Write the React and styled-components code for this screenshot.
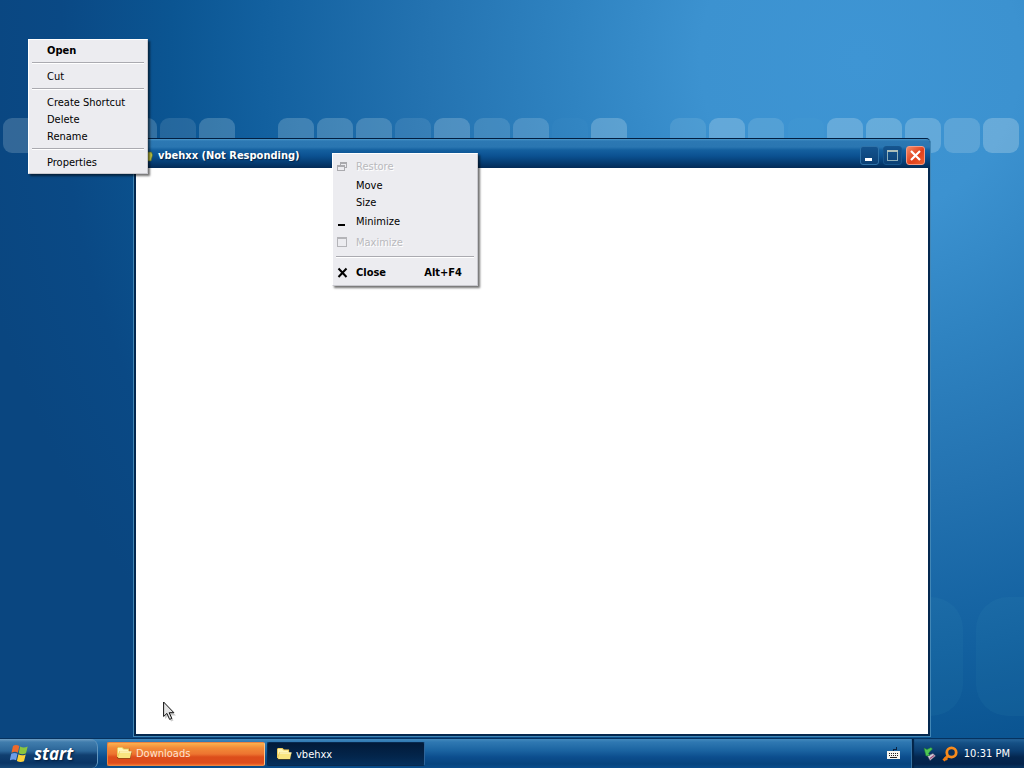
import React from "react";
import styled, { createGlobalStyle } from "styled-components";

const GlobalStyle = createGlobalStyle`
  * { box-sizing: border-box; }
  body {
    margin: 0;
    font: 11px/17px "DejaVu Sans Condensed", "DejaVu Sans", sans-serif;
    color: #000;
  }
  button { font: inherit; color: inherit; padding: 0; border: 0; background: none; }
  svg { display: block; flex: none; }
`;

const Screen = styled.div`
  min-height: 100vh;
  display: flex;
  flex-direction: column;
`;

const Desktop = styled.main`
  flex: 1;
  position: relative;
  overflow: hidden;
  background: radial-gradient(
    circle at 84% 8%,
    #3e95d4 0,
    #3c92d0 160px,
    #2f83c1 290px,
    #2473b1 430px,
    #12609f 600px,
    #0b5592 690px,
    #0a4985 800px,
    #0a4680 900px
  );
`;

const Wallpaper = styled.svg`
  position: absolute;
  top: 0;
  right: 0;
`;

const Window = styled.section`
  position: absolute;
  inset: 138px 93px 1px 133px;
  display: flex;
  flex-direction: column;
  border: 1px solid #4186b5;
  border-top-color: #021e40;
  border-radius: 3px 5px 0 0;
  background: #04284f;
  padding: 0 2px 2px;
`;

const TitleBar = styled.header`
  height: 29px;
  display: flex;
  align-items: center;
  gap: 5px;
  padding: 3px 5px 0 4px;
  margin: 0 -2px;
  border-radius: 2px 4px 0 0;
  background: linear-gradient(#4b96c8 0, #2c78b3 2px, #2a76b1 8px, #14609f 11px, #0b5191 17px, #053b70 24px, #032b57 29px);
  color: #fff;
`;

const Title = styled.h1`
  flex: 1;
  margin: 0;
  font-size: 11px;
  font-weight: bold;
  text-shadow: 1px 1px 1px #02244a;
`;

const WindowButtons = styled.div`
  display: flex;
  gap: 4px;
`;

const WindowButton = styled.button`
  width: 19px;
  height: 19px;
  display: grid;
  place-items: center;
  border: 1px solid ${(p) => (p.$close ? "#f49b86" : p.$dim ? "#17568d" : "#2f72a8")};
  border-radius: 3px;
  background: ${(p) =>
    p.$close
      ? "linear-gradient(135deg, #f58a66, #e0401c 55%, #f0602e)"
      : "linear-gradient(#14548f, #0b4075)"};
`;

const Client = styled.div`
  flex: 1;
  background: #fff;
`;

const Menu = styled.div`
  position: absolute;
  left: ${(p) => p.$x}px;
  top: ${(p) => p.$y}px;
  width: ${(p) => p.$width}px;
  display: flex;
  flex-direction: column;
  padding: 2px;
  border: 1px solid #fff;
  border-right-color: #c9c9cf;
  border-bottom-color: #c9c9cf;
  background: #ececf0;
  box-shadow: 2px 2px 2px rgba(0, 0, 0, 0.55);
`;

const MenuRow = styled.button`
  height: ${(p) => (p.$tall ? 21 : 17)}px;
  display: grid;
  grid-template-columns: 16px 1fr auto;
  align-items: center;
  padding-right: 13px;
  text-align: left;
  font-weight: ${(p) => (p.$bold ? "bold" : "normal")};
  &:disabled {
    color: #b9b9bd;
    text-shadow: 1px 1px 0 #fff;
  }
  svg { margin-left: ${(p) => (p.$tall ? 2 : 0)}px; }
`;

const WideMenu = styled(Menu)`
  ${MenuRow} { grid-template-columns: 21px 1fr auto; }
`;

const Separator = styled.hr`
  width: auto;
  height: 9px;
  margin: 0 1px;
  border: 0;
  background: linear-gradient(transparent 3px, #aaaab0 3px 4px, #fff 4px 5px, transparent 5px);
`;

const Pointer = styled.svg`
  position: absolute;
  left: 163px;
  bottom: 16px;
`;

const Taskbar = styled.footer`
  height: 30px;
  display: flex;
  align-items: stretch;
  border-top: 1px solid #06325f;
  background: linear-gradient(#4389bc 0, #2f78b2 3px, #1c65a2 11px, #0c4e8e 18px, #07447e 25px, #0a5090 30px);
`;

const StartButton = styled.button`
  width: 98px;
  display: flex;
  align-items: center;
  gap: 4px;
  padding-left: 10px;
  border-right: 1px solid #6296be;
  border-radius: 0 8px 6px 0;
  background: linear-gradient(#6e9ec4 0, #417dad 3px, #2a6598 12px, #103f70 16px, #0a3565 24px, #174979 29px);
  color: #fff;
  font: italic bold 17px/20px "Open Sans", sans-serif;
  text-shadow: 1px 1px 2px #021c3b;
`;

const Tasks = styled.nav`
  flex: 1;
  display: flex;
  gap: 2px;
  padding: 3px 0 2px 9px;
`;

const Task = styled.button`
  width: 158px;
  display: flex;
  align-items: center;
  gap: 3px;
  padding-left: 8px;
  padding-bottom: ${(p) => (p.$alert ? 2 : 0)}px;
  border: 1px solid ${(p) => (p.$alert ? "#e9833f" : "#082a50")};
  border-right-color: ${(p) => (p.$alert ? "#ffc188" : "#2e659a")};
  border-radius: 2px;
  background: ${(p) =>
    p.$alert
      ? "linear-gradient(#fbb14f 0, #f18a38 5px, #ed7430 11px, #dc4d1b 14px, #dd4c1b 20px, #f36c2d)"
      : "linear-gradient(#021a39, #03254b 60%, #062f5b)"};
  color: ${(p) => (p.$alert ? "#ffe3d1" : "#fff")};
`;

const InputIndicator = styled.button`
  width: 39px;
  display: grid;
  place-items: center;
  padding: 0 0 0 4px;
`;

const Tray = styled.div`
  display: flex;
  align-items: center;
  gap: 6px;
  padding: 0 14px 0 11px;
  border-left: 1px solid #3774a5;
  box-shadow: inset 2px 0 1px #032448;
  background: linear-gradient(#27669b 0, #155085 4px, #0b3d70 12px, #042750 18px, #03224a 25px, #083765);
  color: #fff;
`;

const TrayButton = styled.button``;

const tiles = [
  [3, 0.2], [42, 0.14], [82, 0.16], [121, 0.2], [160, 0.13], [199, 0.22],
  [278, 0.22], [317, 0.22], [356, 0.21], [395, 0.11], [434, 0.23], [474, 0.15],
  [513, 0.19], [552, 0.02], [591, 0.25], [670, 0.12], [709, 0.25], [748, 0.15],
  [788, 0.02], [827, 0.26], [866, 0.27], [905, 0.25], [944, 0.2], [983, 0.28],
];

function Tiles() {
  return (
    <Wallpaper width="1024" height="738" viewBox="0 0 1024 738" aria-hidden="true">
      {tiles.map(([x, o]) => (
        <rect key={x} x={x} y="118" width="36" height="35" rx="9" fill="#d8ebf2" opacity={o} />
      ))}
      <rect x="850" y="597" width="113" height="119" rx="32" fill="#4fa5bc" opacity="0.08" />
      <rect x="976" y="597" width="118" height="119" rx="32" fill="#4fa5bc" opacity="0.08" />
    </Wallpaper>
  );
}

function FolderIcon() {
  return (
    <svg width="17" height="16" viewBox="0 0 17 16" aria-hidden="true">
      <path d="M1 12.500V3l1-1h4.500L8 3.500h5.500v3H16l-1.500 7.500H2z" fill="#6b4a12" opacity=".55" />
      <path d="M1 12V3l1-1h4.500L8 3.500h5V12z" fill="#f0cd5c" />
      <path d="M2 3h4l1.500 1.500H12V6H3.500L2 9z" fill="#fff6b8" />
      <path d="M4 6.500h11.500L14 13H2z" fill="#f9e580" />
      <path d="M4 6.500h11.500l-.2 1H3.800z" fill="#fffcd8" />
    </svg>
  );
}

function FlagIcon() {
  return (
    <svg width="20" height="19" viewBox="0 0 20 19" aria-hidden="true">
      <path d="M3 2c2-1.500 4-1.400 6.300 0L7.800 8.800C6 7.500 4 7.600 1.500 8.800z" fill="#ef6a2c" />
      <path d="M10.200 2.500c2 1.300 4.500 1.400 7.500.1L16 9.300c-2.500 1.200-5 1.100-7.300-.1z" fill="#8bc53f" />
      <path d="M1.200 9.800c2.400-1.200 4.400-1.200 6.300 0l-1.400 6.500c-1.900-1.200-4-1.200-6.300 0z" fill="#6d9ce8" />
      <path d="M8.400 10.300c2.300 1.200 4.500 1.300 7.300.1l-1.700 6.800c-2.500 1.200-4.800 1-7.100-.2z" fill="#fbd13a" />
    </svg>
  );
}

function ContextMenu() {
  return (
    <Menu role="menu" aria-label="Item" $x={28} $y={39} $width={120}>
      <MenuRow role="menuitem" $bold><i /><span>Open</span></MenuRow>
      <Separator />
      <MenuRow role="menuitem"><i /><span>Cut</span></MenuRow>
      <Separator />
      <MenuRow role="menuitem"><i /><span>Create Shortcut</span></MenuRow>
      <MenuRow role="menuitem"><i /><span>Delete</span></MenuRow>
      <MenuRow role="menuitem"><i /><span>Rename</span></MenuRow>
      <Separator />
      <MenuRow role="menuitem"><i /><span>Properties</span></MenuRow>
    </Menu>
  );
}

function SystemMenu() {
  return (
    <WideMenu role="menu" aria-label="Window" $x={332} $y={153} $width={146}>
      <MenuRow role="menuitem" $tall disabled>
        <svg width="12" height="12" viewBox="0 0 12 12" shapeRendering="crispEdges">
          <path d="M3.500 4V1.500h6v5H7.500M3 2.500h7" fill="none" stroke="#aaaaae" />
          <path d="M.5 4.500h7v5h-7zM0 5.500h8" fill="none" stroke="#aaaaae" />
        </svg>
        <span>Restore</span>
      </MenuRow>
      <MenuRow role="menuitem"><i /><span>Move</span></MenuRow>
      <MenuRow role="menuitem"><i /><span>Size</span></MenuRow>
      <MenuRow role="menuitem" $tall>
        <svg width="12" height="12" viewBox="0 0 12 12"><path d="M1 8h7v2H1z" /></svg>
        <span>Minimize</span>
      </MenuRow>
      <MenuRow role="menuitem" $tall disabled>
        <svg width="12" height="12" viewBox="0 0 12 12" shapeRendering="crispEdges">
          <path d="M.5 .5h9v9H.5zM0 1.500h10" fill="none" stroke="#b4b4b8" />
        </svg>
        <span>Maximize</span>
      </MenuRow>
      <Separator />
      <MenuRow role="menuitem" $tall $bold>
        <svg width="12" height="12" viewBox="0 0 12 12">
          <path d="M1.500 1.500l8 8.500M9.500 1.500l-8 8.500" stroke="#000" strokeWidth="2" />
        </svg>
        <span>Close</span>
        <span>Alt+F4</span>
      </MenuRow>
    </WideMenu>
  );
}

export default function App() {
  return (
    <Screen>
      <GlobalStyle />
      <Desktop>
        <Tiles />
        <Window>
          <TitleBar>
            <svg width="15" height="16" viewBox="0 0 15 16" aria-hidden="true">
              <path d="M1 3h5l2 2h5.500l1 3-1.500 6H1z" fill="#c7cb43" stroke="#4b6c35" strokeWidth=".7" />
            </svg>
            <Title>vbehxx (Not Responding)</Title>
            <WindowButtons>
              <WindowButton aria-label="Minimize">
                <svg width="13" height="13" viewBox="0 0 13 13"><path d="M2 9h7v3H2z" fill="#fff" /></svg>
              </WindowButton>
              <WindowButton aria-label="Maximize" $dim>
                <svg width="13" height="13" viewBox="0 0 13 13" shapeRendering="crispEdges">
                  <path d="M1.500 1.500h10v10h-10z" fill="none" stroke="#8fb0bb" />
                  <path d="M1 1h11v2H1z" fill="#aebfba" />
                </svg>
              </WindowButton>
              <WindowButton aria-label="Close" $close>
                <svg width="13" height="13" viewBox="0 0 13 13">
                  <path d="M2 2l9 9M11 2l-9 9" stroke="#fff" strokeWidth="2.200" />
                </svg>
              </WindowButton>
            </WindowButtons>
          </TitleBar>
          <Client />
        </Window>
        <ContextMenu />
        <SystemMenu />
        <Pointer width="14" height="21" viewBox="0 0 14 21" aria-hidden="true">
          <path d="M2 3v15l3.500-3.200L8 20.500l2.500-1L8 14.500h5z" fill="#000" opacity=".2" />
          <path d="M.6 1v14.500l3.300-3.100 2.700 6 2.200-1-2.600-5.700h4.700z" fill="#e4e4e4" stroke="#111" />
        </Pointer>
      </Desktop>
      <Taskbar>
        <StartButton>
          <FlagIcon />
          <span>start</span>
        </StartButton>
        <Tasks>
          <Task $alert><FolderIcon /><span>Downloads</span></Task>
          <Task><FolderIcon /><span>vbehxx</span></Task>
        </Tasks>
        <InputIndicator aria-label="Keyboard">
          <svg width="13" height="13" viewBox="0 0 13 13" shapeRendering="crispEdges">
            <path d="M6 4V2h3V0" fill="none" stroke="#0a2342" />
            <path d="M0 4h13v8H0z" fill="#f5f5f0" />
            <path d="M2 6.500h10M2 8.500h10" stroke="#222" strokeDasharray="1 1" />
            <path d="M3 10.500h7" stroke="#222" />
          </svg>
        </InputIndicator>
        <Tray>
          <TrayButton aria-label="Safely remove hardware">
            <svg width="13" height="16" viewBox="0 0 13 16">
              <path d="M4.500 10L10 7.500l2.500 2.500L7 14.500z" fill="#d6d0de" stroke="#59536c" strokeWidth=".5" />
              <path d="M7 12.500l4-3" stroke="#a04a76" strokeWidth="1.200" />
              <path d="M1 2l3 1.500L8 1.500 9.500 3 7 5.500l-1.500 2L7 9.500l-4 .5L2 6z" fill="#4fc653" stroke="#1c7a35" strokeWidth=".5" />
            </svg>
          </TrayButton>
          <TrayButton aria-label="Search">
            <svg width="16" height="16" viewBox="0 0 16 16">
              <path d="M6.500 9.500L1.500 14.500" stroke="#f07d12" strokeWidth="3" />
              <circle cx="9.500" cy="6.500" r="4.700" fill="#0b315c" stroke="#f98b1c" strokeWidth="2.800" />
              <path d="M3 11l2 3" stroke="#f07d12" strokeWidth="2" />
            </svg>
          </TrayButton>
          <time>10:31 PM</time>
        </Tray>
      </Taskbar>
    </Screen>
  );
}
